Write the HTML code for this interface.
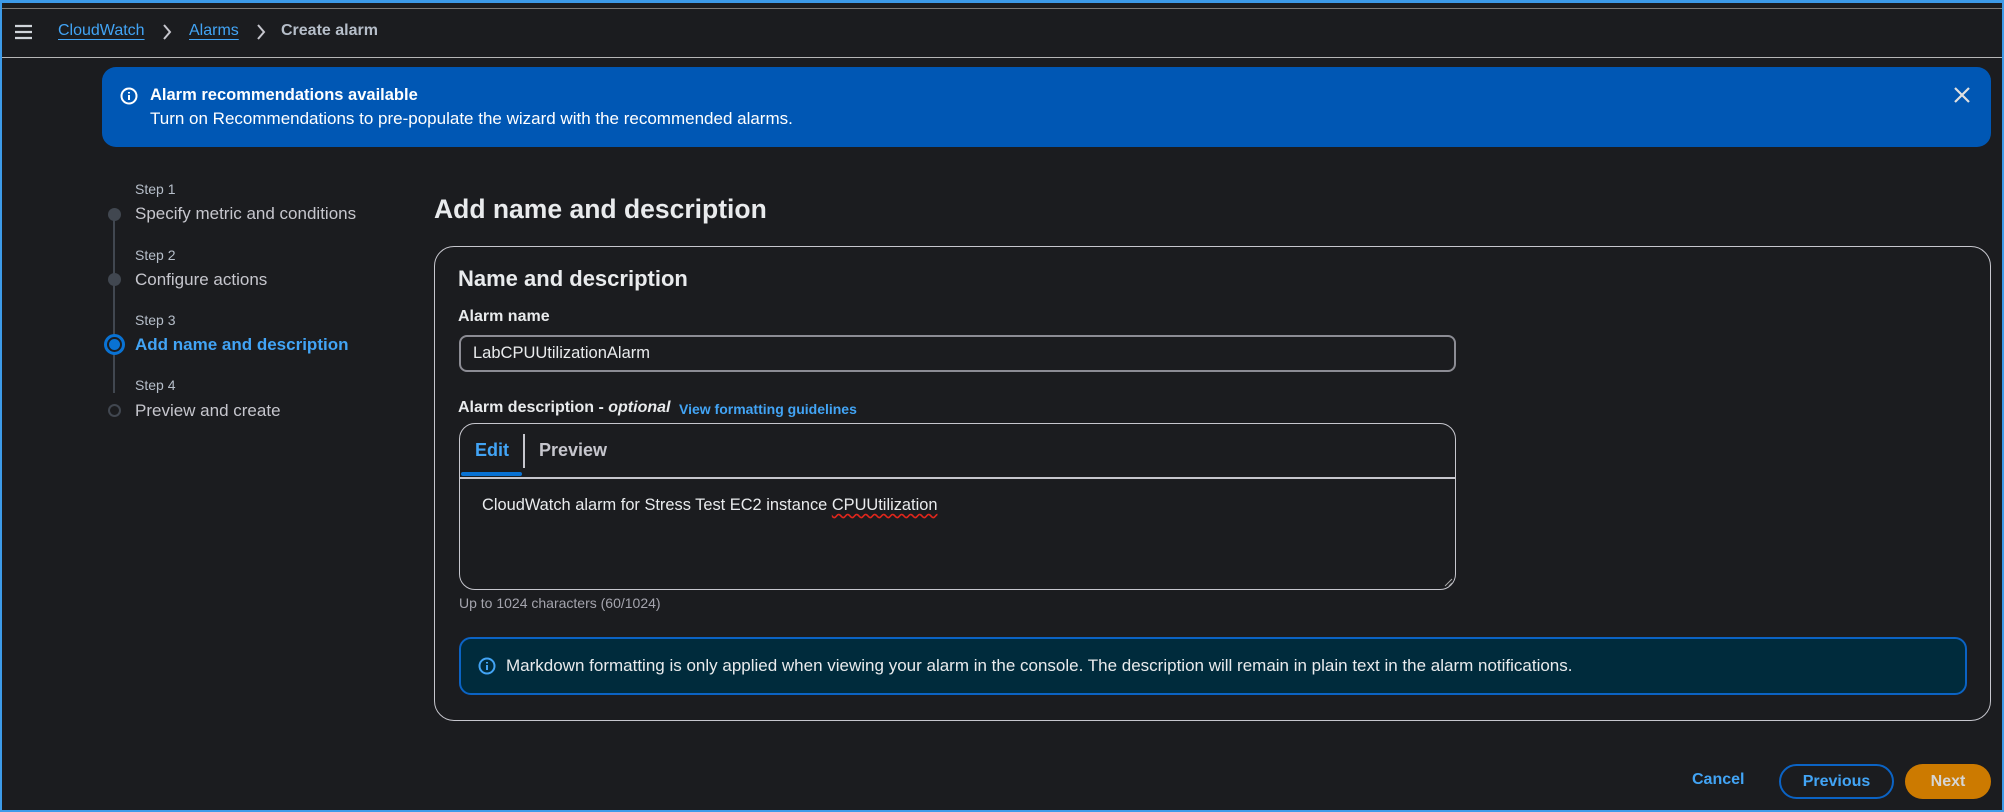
<!DOCTYPE html>
<html><head><meta charset="utf-8"><style>
*{box-sizing:border-box;margin:0;padding:0}
body{width:2004px;height:812px;background:#1b1c1f;font-family:"Liberation Sans",sans-serif;color:#d1d5db;position:relative;overflow:hidden}
.a{position:absolute;white-space:nowrap}
.lnk{color:#42a4f5}
</style></head><body>
<div class="a" style="left:0;top:0;width:2004px;height:812px;border:2px solid #3d9be9;border-top:3px solid #3d9be9;z-index:5"></div>
<div class="a" style="left:0;top:8px;width:2004px;height:1px;background:#7d7a76"></div>
<div class="a" style="left:1865px;top:-11px;font-size:13px;color:#ccc">Test/user3000001</div>
<div class="a" style="left:0;top:57px;width:2004px;height:1px;background:#b6b6b6"></div>
<svg class="a" style="left:15px;top:24px" width="18" height="16"><path d="M0 2h17M0 8h17M0 14h17" stroke="#d1d5db" stroke-width="2.2"/></svg>
<div class="a" style="left:58px;top:22px;font-size:16px"><span class="lnk" style="text-decoration:underline;text-underline-offset:4px">CloudWatch</span></div>
<svg class="a" style="left:162px;top:24px" width="10" height="16"><path d="M2 1l6 7-6 7" stroke="#c6c6cd" stroke-width="2" fill="none"/></svg>
<div class="a" style="left:189px;top:22px;font-size:16px"><span class="lnk" style="text-decoration:underline;text-underline-offset:4px">Alarms</span></div>
<svg class="a" style="left:256px;top:24px" width="10" height="16"><path d="M2 1l6 7-6 7" stroke="#c6c6cd" stroke-width="2" fill="none"/></svg>
<div class="a" style="left:281px;top:22px;font-size:16px;font-weight:bold;color:#b6bec9">Create alarm</div>

<div class="a" style="left:102px;top:67px;width:1889px;height:80px;background:#0057b4;border-radius:14px"></div>
<svg class="a" style="left:120px;top:87px" width="18" height="18"><circle cx="9" cy="9" r="7.5" stroke="#fff" stroke-width="2" fill="none"/><path d="M9 8v5M9 5v1.5" stroke="#fff" stroke-width="2"/></svg>
<div class="a" style="left:150px;top:86px;font-size:16.5px;font-weight:bold;color:#fff">Alarm recommendations available</div>
<div class="a" style="left:150px;top:109px;font-size:17px;color:#fff">Turn on Recommendations to pre-populate the wizard with the recommended alarms.</div>
<svg class="a" style="left:1954px;top:87px" width="16" height="16"><path d="M1 1l14 14M15 1L1 15" stroke="#e0e0e0" stroke-width="2.2"/></svg>

<div class="a" style="left:113px;top:218px;width:2px;height:175px;background:#414750"></div>
<div class="a" style="left:108px;top:208px;width:13px;height:13px;border-radius:50%;background:#414750"></div>
<div class="a" style="left:108px;top:273px;width:13px;height:13px;border-radius:50%;background:#414750"></div>
<div class="a" style="left:104px;top:334px;width:21px;height:21px;border-radius:50%;border:3px solid #0972d3;background:#1b1c1f"></div>
<div class="a" style="left:109px;top:339px;width:11px;height:11px;border-radius:50%;background:#0972d3"></div>
<div class="a" style="left:108px;top:404px;width:13px;height:13px;border-radius:50%;border:2px solid #414750;background:#1b1c1f"></div>
<div class="a" style="left:135px;top:181px;font-size:14px;color:#b6bec9">Step 1</div>
<div class="a" style="left:135px;top:204px;font-size:17px;color:#c6c6cd">Specify metric and conditions</div>
<div class="a" style="left:135px;top:247px;font-size:14px;color:#b6bec9">Step 2</div>
<div class="a" style="left:135px;top:270px;font-size:17px;color:#c6c6cd">Configure actions</div>
<div class="a" style="left:135px;top:312px;font-size:14px;color:#b6bec9">Step 3</div>
<div class="a" style="left:135px;top:335px;font-size:17px;font-weight:bold;color:#42a4f5">Add name and description</div>
<div class="a" style="left:135px;top:377px;font-size:14px;color:#b6bec9">Step 4</div>
<div class="a" style="left:135px;top:401px;font-size:17px;color:#c6c6cd">Preview and create</div>

<div class="a" style="left:434px;top:194px;font-size:26.5px;font-weight:bold;color:#e9ebed">Add name and description</div>
<div class="a" style="left:434px;top:246px;width:1557px;height:475px;border:1.5px solid #c6c6cd;border-radius:20px"></div>
<div class="a" style="left:458px;top:266px;font-size:22px;font-weight:bold;color:#e9ebed">Name and description</div>
<div class="a" style="left:458px;top:308px;font-size:16px;font-weight:bold;color:#e9ebed">Alarm name</div>
<div class="a" style="left:459px;top:335px;width:997px;height:37px;border:2px solid #8c8c94;border-radius:8px"></div>
<div class="a" style="left:473px;top:344px;font-size:16.5px;color:#e9ebed">LabCPUUtilizationAlarm</div>
<div class="a" style="left:458px;top:399px;font-size:16px;font-weight:bold;color:#e9ebed">Alarm description - <i>optional</i></div>
<div class="a" style="left:679px;top:401px;font-size:14px;font-weight:bold;color:#42a4f5">View formatting guidelines</div>
<div class="a" style="left:459px;top:423px;width:997px;height:167px;border:1.5px solid #c6c6cd;border-radius:16px"></div>
<div class="a" style="left:460px;top:477px;width:995px;height:1.5px;background:#c6c6cd"></div>
<div class="a" style="left:475px;top:440px;font-size:18px;font-weight:bold;color:#42a4f5">Edit</div>
<div class="a" style="left:523px;top:434px;width:1.5px;height:34px;background:#c6c6cd"></div>
<div class="a" style="left:539px;top:440px;font-size:18px;font-weight:bold;color:#c6c6cd">Preview</div>
<div class="a" style="left:461px;top:472px;width:61px;height:4px;border-radius:2px;background:#0972d3"></div>
<div class="a" style="left:482px;top:496px;font-size:16.4px;color:#e9ebed">CloudWatch alarm for Stress Test EC2 instance <span style="text-decoration:underline wavy #e0261c;text-underline-offset:3px">CPUUtilization</span></div>
<svg class="a" style="left:1443px;top:577px" width="10" height="10"><path d="M9 2L2 9M9 6L6 9" stroke="#aaa" stroke-width="1"/></svg>
<div class="a" style="left:459px;top:595px;font-size:14px;color:#a4a4ad">Up to 1024 characters (60/1024)</div>
<div class="a" style="left:459px;top:637px;width:1508px;height:58px;background:#002b3c;border:2px solid #0b63c4;border-radius:12px"></div>
<svg class="a" style="left:478px;top:657px" width="18" height="18"><circle cx="9" cy="9" r="7.5" stroke="#42a4f5" stroke-width="2" fill="none"/><path d="M9 8v5M9 5v1.5" stroke="#42a4f5" stroke-width="2"/></svg>
<div class="a" style="left:506px;top:656px;font-size:17px;color:#e9ebed">Markdown formatting is only applied when viewing your alarm in the console. The description will remain in plain text in the alarm notifications.</div>

<div class="a" style="left:1692px;top:771px;font-size:16px;font-weight:bold;color:#42a4f5">Cancel</div>
<div class="a" style="left:1779px;top:764px;width:115px;height:35px;border:2px solid #0b63c4;border-radius:18px;text-align:center;line-height:31px;font-size:16px;font-weight:bold;color:#42a4f5">Previous</div>
<div class="a" style="left:1905px;top:764px;width:86px;height:35px;background:#cc7a00;border-radius:18px;text-align:center;line-height:35px;font-size:16px;font-weight:bold;color:#d5d5d5">Next</div>
</body></html>
